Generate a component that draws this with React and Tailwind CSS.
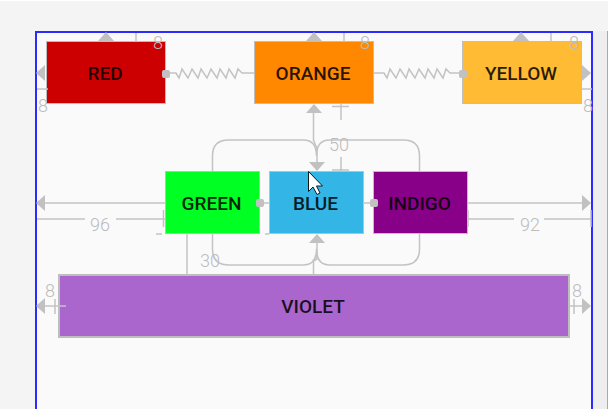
const widgetBase =
  "box-border flex items-center justify-center border-[#bebebe] pt-0.5 pr-0.5 text-[19px] leading-5 font-medium text-black/85";

function Widget({ label, className }) {
  return (
    <button type="button" className={`${widgetBase} ${className}`}>
      {label}
    </button>
  );
}

function Constraints() {
  return (
    <svg
      className="pointer-events-none absolute inset-0 h-full w-full"
      aria-hidden="true"
      fill="none"
      stroke="#c3c3c3"
      strokeWidth="1.5"
    >
      <path d="M136 33v9M344 33v9M551 33v9M37 89h11M582 89h10" />
      <path d="M166 73h10l3 5l3 -9l6 9l4 -9l6 9l3 -9l6 9l4 -9l6 9l3 -9l6 9l3 -9l6 9l3 -9l4 4h12" />
      <path d="M374 73h10l3 5l3 -9l6 9l4 -9l6 9l3 -9l6 9l4 -9l6 9l3 -9l6 9l3 -9l6 9l3 -9l4 4h12" />
      <path d="M313.500 108v32l3.500 9v18M332 106.500h17M341 104v16M341 157v14M332 170h17" />
      <path d="M212.500 171v-15q0 -16 16 -16h75q13 0 13 16q0 -16 13 -16h74q16 0 16 16v15" />
      <path d="M212.500 234v15q0 16 16 16h75q13 0 13 -16q0 16 13 16h74q16 0 16 -16v-15" />
      <path d="M317 240v19l-3.500 2v13M187 234v40M156 234h6M265 234h4" />
      <path d="M42 203h123M37 219h48M116 219h49M163.500 210v17" />
      <path d="M468 203h119M468 219h46M544 219h47M468 210v17M591 210v17" />
      <path d="M42 306h24M55 299v15M570 306h16M574 299v15" />
      <path d="M259 203h11M363 203h11" />
      <g fill="#c1c1c1" stroke="none">
        <path d="M106 32l8 9h-16zM314 32l8 9h-16zM521 32l8 9h-16z" />
        <path d="M36 73l9 -8v16zM591 73l-9 -8v16zM36 203l9 -8v16zM591 203l-9 -8v16z" />
        <path d="M36 306l9 -8v16zM591 306l-9 -8v16zM314 104l8 9h-16zM317 171l8 -9h-16zM317 234l8 9h-16z" />
        <rect x="162" y="70" width="8" height="8" rx="2" />
        <rect x="459" y="70" width="8" height="8" rx="2" />
        <rect x="256" y="199" width="8" height="8" rx="2" />
        <rect x="370" y="199" width="8" height="8" rx="2" />
      </g>
      <g className="font-['Roboto',sans-serif] text-[18px] font-light" fill="#bcbcbc" stroke="none" textAnchor="middle">
        <text x="158" y="49">8</text>
        <text x="365" y="49">8</text>
        <text x="574" y="49">8</text>
        <text x="43" y="112">8</text>
        <text x="588" y="112">8</text>
        <text x="339" y="151">50</text>
        <text x="100" y="231">96</text>
        <text x="530" y="231">92</text>
        <text x="210" y="267">30</text>
        <text x="50" y="297">8</text>
        <text x="577" y="297">8</text>
      </g>
    </svg>
  );
}

function Pointer() {
  return (
    <svg className="pointer-events-none absolute top-[171px] left-[308px] h-6 w-4" viewBox="0 0 16 24" aria-hidden="true">
      <path d="M0.500 0.500v20l4.500 -4.500l4 7.500l3 -1.500l-3.500 -7h6z" fill="white" stroke="#101820" />
    </svg>
  );
}

export default function App() {
  return (
    <main className="relative flex h-screen flex-col overflow-hidden bg-[#f4f4f4] font-['Roboto',sans-serif]">
      <div className="h-px shrink-0 bg-white" />
      <div className="flex grow pt-[30px] pl-[35px]">
        <section className="grow border-2 border-b-0 border-[#2b2bff] bg-[#fafafa] px-[9px] pt-2" aria-label="Design surface">
          <div className="flex justify-between">
            <Widget label="RED" className="h-[63px] w-[120px] border bg-[#cc0000]" />
            <Widget label="ORANGE" className="h-[63px] w-[120px] border bg-[#ff8800]" />
            <Widget label="YELLOW" className="h-[63px] w-[120px] border bg-[#ffbb33]" />
          </div>
          <div className="mt-[67px] flex justify-center gap-[9px] pl-[5px]">
            <Widget label="GREEN" className="h-[63px] w-[95px] border bg-[#00ff22]" />
            <Widget label="BLUE" className="h-[63px] w-[95px] border bg-[#33b5e5]" />
            <Widget label="INDIGO" className="h-[63px] w-[95px] border bg-[#880088]" />
          </div>
          <div className="mt-10 px-3">
            <Widget label="VIOLET" className="h-16 w-full border-2 bg-[#aa66cc]" />
          </div>
        </section>
        <div className="w-3.5 shrink-0 bg-[#eeeeee]" />
        <aside className="w-px shrink-0 bg-[#8eb1cb]" aria-label="Blueprint" />
      </div>
      <Constraints />
      <Pointer />
    </main>
  );
}
